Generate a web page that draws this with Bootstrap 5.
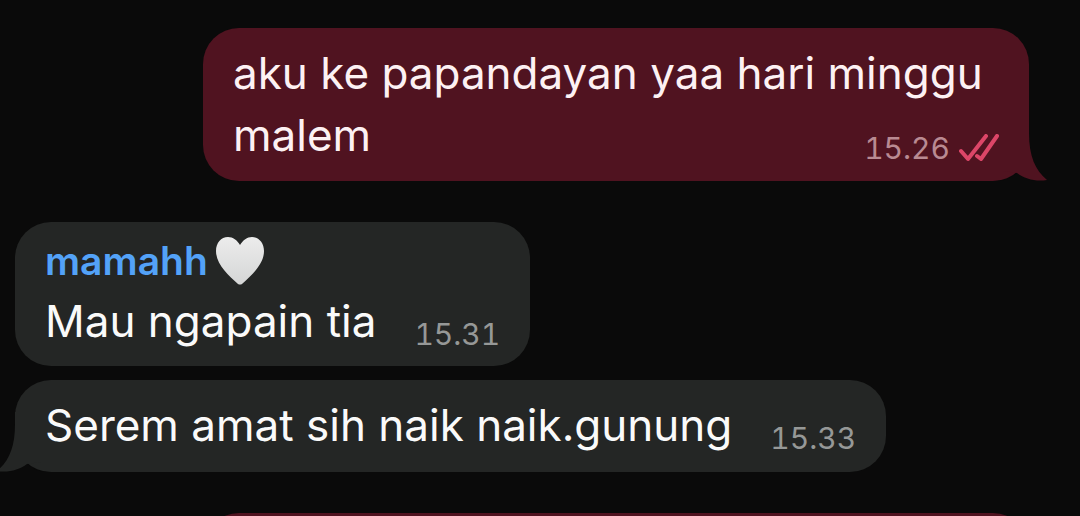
<!DOCTYPE html>
<html lang="id">
<head>
<meta charset="utf-8">
<meta name="viewport" content="width=device-width, initial-scale=1">
<title>Chat</title>
<link href="https://cdn.jsdelivr.net/npm/bootstrap@5.3.0/dist/css/bootstrap.min.css" rel="stylesheet">
<style>
  body { background: #0a0a0a; font-family: Inter, "Liberation Sans", sans-serif; }
  .thread { padding: 28px 51px 0 15px; }
  .bubble { border-radius: 36px; padding: 14px 30px 16px; font-size: 44px; line-height: 62px; }
  .sent { background: #501320; color: #fdf1f3; width: 826px; max-width: 82%; padding-bottom: 15px; }
  .received { background: #242625; color: #fafafa; }
  .received.named { padding: 10px 30px 14px; }
  .sender { color: #53a2f8; font-size: 39px; font-weight: 600; line-height: 58px; gap: 8px; }
  .stamp { font-size: 30px; line-height: 36px; color: #969897; font-variant-numeric: tabular-nums; }
  .sent .stamp { color: #b98a92; gap: 9px; margin-top: 26px; }
  .received .stamp { margin-left: 38px; }
  .tail-out { right: -19px; bottom: 0; }
  .tail-in { left: -19px; bottom: 0; }
  .gap-turn { margin-top: 41px; }
  .gap-same { margin-top: 14px; }
  .upcoming { height: 153px; }
</style>
</head>
<body>
<main class="thread vh-100 overflow-hidden d-flex flex-column">
  <article class="bubble sent position-relative align-self-end flex-shrink-0">
    aku ke papandayan yaa hari minggu malem
    <span class="stamp float-end d-flex align-items-center">
      <time>15.26</time>
      <svg width="40" height="28" viewBox="0 0 40 28" fill="none" stroke="#dc4668" stroke-width="4" stroke-linecap="round" stroke-linejoin="round" role="img" aria-label="Dibaca"><path d="M2 17l7 8L27 2M18 22l4 3L38 2"/></svg>
    </span>
    <svg class="tail-out position-absolute" width="55" height="60" viewBox="0 0 55 60" aria-hidden="true"><path fill="#0a0a0a" d="M5 60Q16 59 24 52L40 60z"/><path fill="#501320" d="M10 0H36V12C36 35 42 49 54 59C43 61 32 58 24 52L10 50z"/></svg>
  </article>

  <article class="bubble received named align-self-start flex-shrink-0 gap-turn">
    <div class="sender d-flex align-items-center">
      <span>mamahh</span>
      <svg width="48" height="48" viewBox="0 0 48 48" role="img" aria-label="hati putih"><defs><linearGradient id="heart" x1="0" y1="0" x2="0" y2="1"><stop offset="0" stop-color="#ececec"/><stop offset="1" stop-color="#d5d6d6"/></linearGradient></defs><path fill="url(#heart)" d="M24 8C21 3 17 0 12 0C5 0 0 6 0 14C0 27 12 38 22 47Q24 48 26 47C36 38 48 27 48 14C48 6 43 0 36 0C31 0 27 3 24 8z"/></svg>
    </div>
    <div class="d-flex align-items-end">
      <p class="m-0">Mau ngapain tia</p>
      <time class="stamp">15.31</time>
    </div>
  </article>

  <article class="bubble received position-relative align-self-start flex-shrink-0 gap-same">
    <div class="d-flex align-items-end">
      <p class="m-0">Serem amat sih naik naik.gunung</p>
      <time class="stamp">15.33</time>
    </div>
    <svg class="tail-in position-absolute" width="55" height="60" viewBox="0 0 55 60" aria-hidden="true"><path fill="#0a0a0a" d="M50 60Q39 59 31 52L15 60z"/><path fill="#242625" d="M45 0H19V12C19 35 13 49 1 59C12 61 23 58 31 52L45 50z"/></svg>
  </article>

  <article class="bubble sent upcoming align-self-end flex-shrink-0 gap-turn" aria-hidden="true"></article>
</main>
<script src="https://cdn.jsdelivr.net/npm/bootstrap@5.3.0/dist/js/bootstrap.bundle.min.js"></script>
</body>
</html>
